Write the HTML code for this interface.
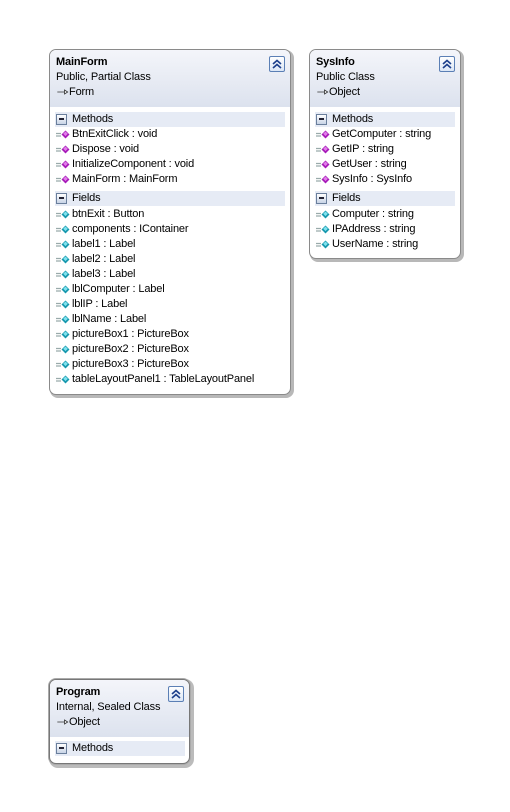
<!DOCTYPE html>
<html><head><meta charset="utf-8"><style>
body{margin:0;width:510px;height:812px;background:#fff;position:relative;overflow:hidden;font-family:Tahoma,"Liberation Sans","DejaVu Sans",sans-serif;font-size:11px;color:#000;letter-spacing:-0.15px}
.box{position:absolute;border:1px solid #8a8a8a;border-radius:7px;background:#fff;box-shadow:2px 2px 0 1px #b8b8b8;overflow:hidden}
.hd{position:absolute;left:0;right:0;top:0;height:57px;background:linear-gradient(#f4f5fa,#dce2ee)}
.t{position:absolute;left:6px;top:6px;font-weight:bold;font-size:11px}
.s{position:absolute;left:6px;top:21px}
.b{position:absolute;left:6px;top:36px}
.arr{display:inline-block;width:13px;height:8px;vertical-align:-1px}
.btn{position:absolute;top:6px;width:14px;height:14px;border:1px solid #5b7fb5;border-radius:2px;background:linear-gradient(#ffffff,#dbe6f6)}
.sec{position:absolute;left:5px;height:15px;background:#e6ebf5}
.sec span{position:absolute;left:17px;top:1px}
.si{position:absolute;left:1px;top:2px;width:9px;height:9px;border:1px solid #6a7f9c;background:linear-gradient(#fff,#c8d4e6)}
.si:after{content:"";position:absolute;left:2px;top:3px;width:5px;height:2px;background:#223}
.r{position:absolute;left:6px;height:15px;white-space:nowrap}
.r svg{position:absolute;left:0;top:2px;width:15px;height:11px}
.r span{position:absolute;left:16px;top:1px}
</style></head><body>

<svg width="0" height="0" style="position:absolute">
<defs>
<g id="m"><path d="M0 4.5h5M0 7h5" stroke="#9aa" stroke-width="1.2"/><path d="M9.5 1.5l4 4-4 4-4-4z" fill="#a61ab8"/><path d="M9.5 2.5l2.3 2.3-2.3 2.3-2.3-2.3z" fill="#e27de9"/></g>
<g id="f"><path d="M0 4.5h5M0 7h5" stroke="#9aa" stroke-width="1.2"/><path d="M9.5 1.5l4 4-4 4-4-4z" fill="#1597ad"/><path d="M9.5 2.5l2.3 2.3-2.3 2.3-2.3-2.3z" fill="#7fe2ee"/></g>
<g id="c"><path d="M3 7l4-3.5 4 3.5M3 11l4-3.5 4 3.5" stroke="#1c3f8c" stroke-width="1.6" fill="none"/></g>
<g id="a"><path d="M0 5h10" stroke="#333"/><path d="M9 2.5l4 2.5-4 2.5z" fill="#fff" stroke="#333"/></g>
</defs></svg>

<!-- MainForm -->
<div class="box" style="left:49px;top:49px;width:240px;height:344px">
<div class="hd"></div>
<div class="t">MainForm</div>
<div class="s">Public, Partial Class</div>
<div class="b"><svg class="arr" viewBox="0 0 13 10"><use href="#a"/></svg>Form</div>
<div class="btn" style="left:219px"><svg width="14" height="14"><use href="#c"/></svg></div>
<div class="sec" style="top:62px;width:230px"><div class="si"></div><span>Methods</span></div>
<div class="r" style="top:77px"><svg viewBox="0 0 15 11"><use href="#m"/></svg><span>BtnExitClick : void</span></div>
<div class="r" style="top:92px"><svg viewBox="0 0 15 11"><use href="#m"/></svg><span>Dispose : void</span></div>
<div class="r" style="top:107px"><svg viewBox="0 0 15 11"><use href="#m"/></svg><span>InitializeComponent : void</span></div>
<div class="r" style="top:122px"><svg viewBox="0 0 15 11"><use href="#m"/></svg><span>MainForm : MainForm</span></div>
<div class="sec" style="top:141px;width:230px"><div class="si"></div><span>Fields</span></div>
<div class="r" style="top:157px"><svg viewBox="0 0 15 11"><use href="#f"/></svg><span>btnExit : Button</span></div>
<div class="r" style="top:172px"><svg viewBox="0 0 15 11"><use href="#f"/></svg><span>components : IContainer</span></div>
<div class="r" style="top:187px"><svg viewBox="0 0 15 11"><use href="#f"/></svg><span>label1 : Label</span></div>
<div class="r" style="top:202px"><svg viewBox="0 0 15 11"><use href="#f"/></svg><span>label2 : Label</span></div>
<div class="r" style="top:217px"><svg viewBox="0 0 15 11"><use href="#f"/></svg><span>label3 : Label</span></div>
<div class="r" style="top:232px"><svg viewBox="0 0 15 11"><use href="#f"/></svg><span>lblComputer : Label</span></div>
<div class="r" style="top:247px"><svg viewBox="0 0 15 11"><use href="#f"/></svg><span>lblIP : Label</span></div>
<div class="r" style="top:262px"><svg viewBox="0 0 15 11"><use href="#f"/></svg><span>lblName : Label</span></div>
<div class="r" style="top:277px"><svg viewBox="0 0 15 11"><use href="#f"/></svg><span>pictureBox1 : PictureBox</span></div>
<div class="r" style="top:292px"><svg viewBox="0 0 15 11"><use href="#f"/></svg><span>pictureBox2 : PictureBox</span></div>
<div class="r" style="top:307px"><svg viewBox="0 0 15 11"><use href="#f"/></svg><span>pictureBox3 : PictureBox</span></div>
<div class="r" style="top:322px"><svg viewBox="0 0 15 11"><use href="#f"/></svg><span>tableLayoutPanel1 : TableLayoutPanel</span></div>
</div>

<!-- SysInfo -->
<div class="box" style="left:309px;top:49px;width:150px;height:208px">
<div class="hd"></div>
<div class="t">SysInfo</div>
<div class="s">Public Class</div>
<div class="b"><svg class="arr" viewBox="0 0 13 10"><use href="#a"/></svg>Object</div>
<div class="btn" style="left:129px"><svg width="14" height="14"><use href="#c"/></svg></div>
<div class="sec" style="top:62px;width:140px"><div class="si"></div><span>Methods</span></div>
<div class="r" style="top:77px"><svg viewBox="0 0 15 11"><use href="#m"/></svg><span>GetComputer : string</span></div>
<div class="r" style="top:92px"><svg viewBox="0 0 15 11"><use href="#m"/></svg><span>GetIP : string</span></div>
<div class="r" style="top:107px"><svg viewBox="0 0 15 11"><use href="#m"/></svg><span>GetUser : string</span></div>
<div class="r" style="top:122px"><svg viewBox="0 0 15 11"><use href="#m"/></svg><span>SysInfo : SysInfo</span></div>
<div class="sec" style="top:141px;width:140px"><div class="si"></div><span>Fields</span></div>
<div class="r" style="top:157px"><svg viewBox="0 0 15 11"><use href="#f"/></svg><span>Computer : string</span></div>
<div class="r" style="top:172px"><svg viewBox="0 0 15 11"><use href="#f"/></svg><span>IPAddress : string</span></div>
<div class="r" style="top:187px"><svg viewBox="0 0 15 11"><use href="#f"/></svg><span>UserName : string</span></div>
</div>

<!-- Program -->
<div class="box" style="left:49px;top:679px;width:139px;height:83px;border-color:#777;box-shadow:0 0 0 1px #aaa,2px 2px 0 2px #bbb">
<div class="hd"></div>
<div class="t">Program</div>
<div class="s">Internal, Sealed Class</div>
<div class="b"><svg class="arr" viewBox="0 0 13 10"><use href="#a"/></svg>Object</div>
<div class="btn" style="left:118px"><svg width="14" height="14"><use href="#c"/></svg></div>
<div class="sec" style="top:61px;width:130px"><div class="si"></div><span>Methods</span></div>
</div>
</body></html>
